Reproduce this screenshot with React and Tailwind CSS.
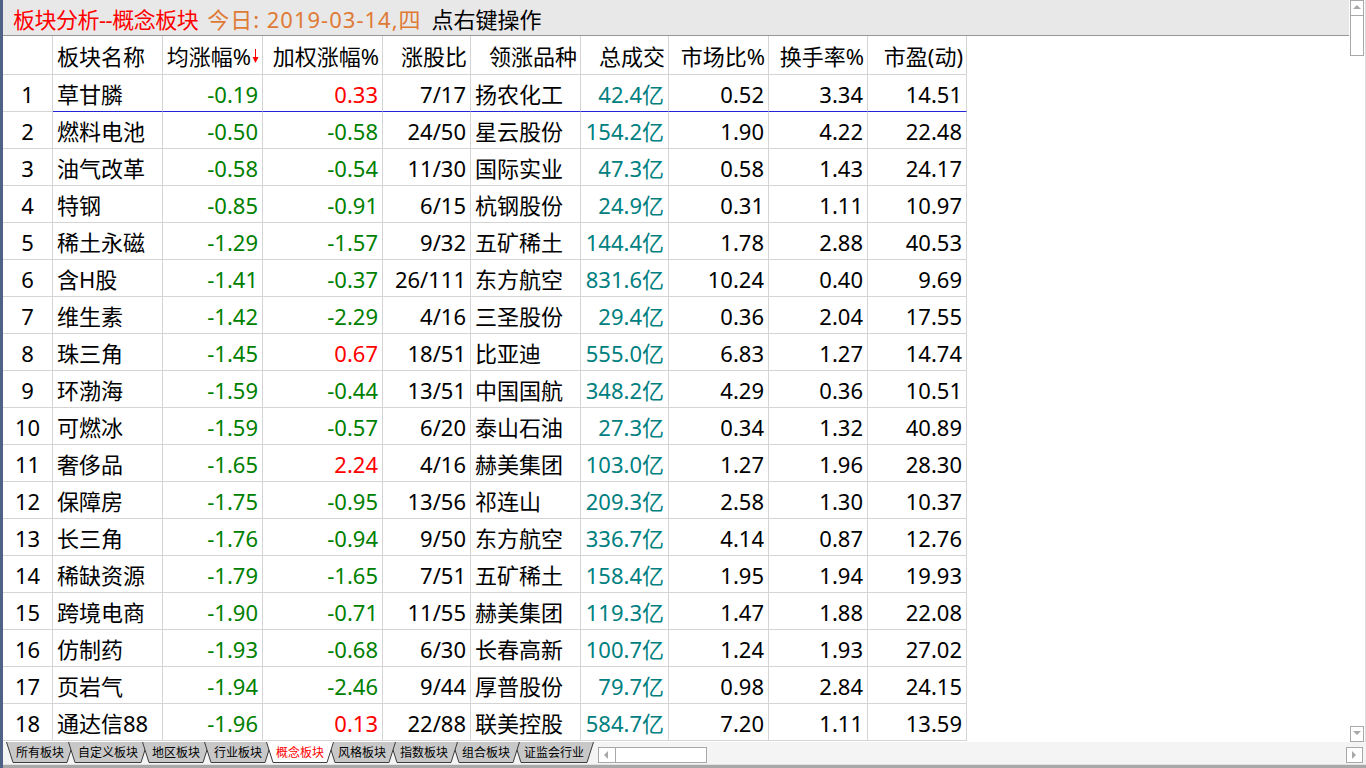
import React from "react";

const G = "text-[#008000]";
const R = "text-[#ff0000]";

const rows = [
  ["1", "草甘膦", "-0.19", "0.33", "7/17", "扬农化工", "42.4亿", "0.52", "3.34", "14.51"],
  ["2", "燃料电池", "-0.50", "-0.58", "24/50", "星云股份", "154.2亿", "1.90", "4.22", "22.48"],
  ["3", "油气改革", "-0.58", "-0.54", "11/30", "国际实业", "47.3亿", "0.58", "1.43", "24.17"],
  ["4", "特钢", "-0.85", "-0.91", "6/15", "杭钢股份", "24.9亿", "0.31", "1.11", "10.97"],
  ["5", "稀土永磁", "-1.29", "-1.57", "9/32", "五矿稀土", "144.4亿", "1.78", "2.88", "40.53"],
  ["6", "含H股", "-1.41", "-0.37", "26/111", "东方航空", "831.6亿", "10.24", "0.40", "9.69"],
  ["7", "维生素", "-1.42", "-2.29", "4/16", "三圣股份", "29.4亿", "0.36", "2.04", "17.55"],
  ["8", "珠三角", "-1.45", "0.67", "18/51", "比亚迪", "555.0亿", "6.83", "1.27", "14.74"],
  ["9", "环渤海", "-1.59", "-0.44", "13/51", "中国国航", "348.2亿", "4.29", "0.36", "10.51"],
  ["10", "可燃冰", "-1.59", "-0.57", "6/20", "泰山石油", "27.3亿", "0.34", "1.32", "40.89"],
  ["11", "奢侈品", "-1.65", "2.24", "4/16", "赫美集团", "103.0亿", "1.27", "1.96", "28.30"],
  ["12", "保障房", "-1.75", "-0.95", "13/56", "祁连山", "209.3亿", "2.58", "1.30", "10.37"],
  ["13", "长三角", "-1.76", "-0.94", "9/50", "东方航空", "336.7亿", "4.14", "0.87", "12.76"],
  ["14", "稀缺资源", "-1.79", "-1.65", "7/51", "五矿稀土", "158.4亿", "1.95", "1.94", "19.93"],
  ["15", "跨境电商", "-1.90", "-0.71", "11/55", "赫美集团", "119.3亿", "1.47", "1.88", "22.08"],
  ["16", "仿制药", "-1.93", "-0.68", "6/30", "长春高新", "100.7亿", "1.24", "1.93", "27.02"],
  ["17", "页岩气", "-1.94", "-2.46", "9/44", "厚普股份", "79.7亿", "0.98", "2.84", "24.15"],
  ["18", "通达信88", "-1.96", "0.13", "22/88", "联美控股", "584.7亿", "7.20", "1.11", "13.59"],
];

// widths include the right border line
const widths = ["w-[50px]", "w-[110px]", "w-[100px]", "w-[120px]", "w-[88px]", "w-[110px]", "w-[88px]", "w-[100px]", "w-[99px]", "w-[99px]"];

const headers = ["", "板块名称", "均涨幅%", "加权涨幅%", "涨股比", "领涨品种", "总成交", "市场比%", "换手率%", "市盈(动)"];

const tabs = [
  { label: "所有板块", w: 68, z: "z-[1]" },
  { label: "自定义板块", w: 80, z: "z-[2]" },
  { label: "地区板块", w: 68, z: "z-[3]" },
  { label: "行业板块", w: 68, z: "z-[4]" },
  { label: "概念板块", w: 68, z: "z-[10]", active: true },
  { label: "风格板块", w: 68, z: "z-[9]" },
  { label: "指数板块", w: 68, z: "z-[8]" },
  { label: "组合板块", w: 68, z: "z-[7]" },
  { label: "证监会行业", w: 80, z: "z-[6]" },
];

const cellColor = (ci, v) => {
  if (ci === 2 || ci === 3) return v.startsWith("-") ? G : R;
  if (ci === 6) return "text-[#008080]";
  return "text-black";
};

const Tab = ({ label, w, z, active }) => (
  <div className={`relative h-[21px] -ml-[6px] first:ml-0 flex items-center justify-center ${z}`} style={{ width: w }}>
    <svg className="absolute inset-0" width={w} height="21">
      <polygon
        points={`0.5,0 ${w - 0.5},0 ${w - 7},20.5 7,20.5`}
        fill={active ? "#ffffff" : "#c8c8c8"}
        stroke="none"
      />
      <polyline
        points={`0.5,0 7,20.5 ${w - 7},20.5 ${w - 0.5},0`}
        fill="none"
        stroke="#3c3c3c"
        strokeWidth="1"
      />
    </svg>
    <span className={`relative text-[12px] leading-none ${active ? "text-[#ff0000]" : "text-black"}`}>{label}</span>
  </div>
);

const Arrow = ({ dir }) => {
  const pts = {
    up: "1,6 5,2 9,6",
    down: "1,2 5,6 9,2",
    left: "6,1 2,5 6,9",
    right: "2,1 6,5 2,9",
  }[dir];
  return (
    <svg width="10" height="10" viewBox="0 0 10 10">
      <polygon points={pts} fill="#a8a8a8" />
    </svg>
  );
};

const SortArrow = () => (
  <svg width="7" height="15" viewBox="0 0 7 15" className="self-start mt-[10px] ml-px">
    <line x1="3.5" y1="0" x2="3.5" y2="12" stroke="#ff0000" strokeWidth="1" />
    <polygon points="0.5,8 6.5,8 3.5,14" fill="#ff0000" />
  </svg>
);

export default function App() {
  return (
    <div className="w-[1366px] h-[768px] overflow-hidden bg-white flex font-['Noto_Sans','Noto_Sans_CJK_SC',sans-serif]">
      <div className="w-[3px] h-full bg-[#4d6285]" />
      <div className="flex-1 flex flex-col">
        <div className="flex h-[742px]">
          <div className="w-[1346px] flex flex-col">
            <div className="h-[36px] bg-[#e8e8e8] border-b border-[#979797] flex items-center pl-[10px] pt-[2px] text-[22px] leading-none whitespace-nowrap">
              <span className="text-[#ff0000] tracking-[-0.5px]">板块分析--概念板块</span>
              <span className="text-[#df7a35] ml-[9px] tracking-[1px]">今日: 2019-03-14,四</span>
              <span className="text-black ml-[10px]">点右键操作</span>
            </div>
            <div className="flex h-[39px] text-[22px] text-black">
              {headers.map((h, i) => (
                <div
                  key={i}
                  className={`${widths[i]} h-full border-r border-b border-[#d4d4d4] flex items-center pt-[3px] whitespace-nowrap ${
                    i === 1 ? "justify-start pl-[4px]" : "justify-end pr-[3px]"
                  }`}
                >
                  <span>{h}</span>
                  {i === 2 && <SortArrow />}
                </div>
              ))}
            </div>
            {rows.map((r, ri) => (
              <div key={ri} className="flex h-[37px] text-[22px]">
                {r.map((v, ci) => (
                  <div
                    key={ci}
                    className={`${widths[ci]} h-full border-r border-b flex items-center pt-[3px] whitespace-nowrap ${
                      ri === 0 && ci > 0 ? "border-b-[#2424d8] border-r-[#d4d4d4]" : "border-[#d4d4d4]"
                    } ${
                      ci === 0
                        ? "justify-center"
                        : ci === 1 || ci === 5
                        ? "justify-start pl-[4px]"
                        : "justify-end pr-[4px]"
                    } ${cellColor(ci, v)}`}
                  >
                    {v}
                  </div>
                ))}
              </div>
            ))}
          </div>
          <div className="w-[17px] h-full flex flex-col border-r border-[#dcdcdc]">
            <div className="ml-[1px] w-[14px] h-[16px] border border-[#a8a8a8] flex items-center justify-center">
              <Arrow dir="up" />
            </div>
            <div className="ml-[1px] w-[14px] h-[40px] border border-t-0 border-[#a8a8a8]" />
            <div className="mt-auto ml-[1px] w-[14px] h-[16px] border border-[#a8a8a8] flex items-center justify-center">
              <Arrow dir="down" />
            </div>
          </div>
        </div>
        <div className="h-[22px] flex items-start pl-[3px] bg-[#f4f4f4]">
          {tabs.map((t) => (
            <Tab key={t.label} {...t} />
          ))}
          <div className="ml-[4px] mt-[5px] flex h-[16px]">
            <div className="w-[18px] h-full border border-[#a8a8a8] bg-white flex items-center justify-center">
              <Arrow dir="left" />
            </div>
            <div className="w-[91px] h-full border border-l-0 border-[#a8a8a8] bg-white" />
          </div>
          <div className="ml-auto mr-[3px] mt-[5px] w-[17px] h-[16px] border border-[#a8a8a8] bg-white flex items-center justify-center">
            <Arrow dir="right" />
          </div>
        </div>
        <div className="h-px bg-[#e2e2e2]" />
        <div className="h-[3px] bg-[#a8a8a8]" />
      </div>
    </div>
  );
}
